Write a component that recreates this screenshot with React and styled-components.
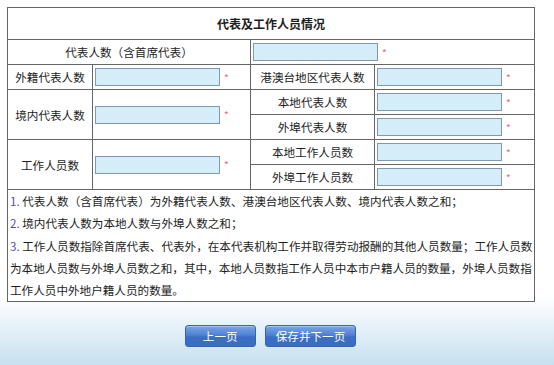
import React from "react";
import styled, { createGlobalStyle } from "styled-components";

const GlobalStyle = createGlobalStyle`
  html, body {
    margin: 0;
    padding: 0;
  }
  body {
    font-family: "Noto Sans CJK SC", "Liberation Sans", sans-serif;
    color: #1e1e1e;
  }
`;

const Page = styled.div`
  box-sizing: border-box;
  min-height: 365px;
  padding: 7px 0 0 7px;
  background: linear-gradient(
    to bottom,
    #fff 0,
    #fff 296px,
    #eef5fb 318px,
    #c6e0ef 365px
  );
`;

const Form = styled.div`
  width: 527px;
`;

const Table = styled.table`
  width: 527px;
  border-collapse: collapse;
  table-layout: fixed;
  background: #fff;
  border: 1px solid #555;
  font-size: 11.6px;
`;

const Cell = styled.td`
  border: 1px solid #666;
  padding: 0 0 0 ${(p) => (p.$field ? "2px" : "0")};
  height: ${(p) => (p.$tall ? "31px" : "24px")};
  text-align: ${(p) => (p.$field ? "left" : "center")};
  vertical-align: middle;
  white-space: nowrap;
`;

const Title = styled(Cell)`
  font-weight: bold;
  font-size: 12px;
`;

const Input = styled.input`
  box-sizing: border-box;
  width: 125px;
  height: 18px;
  margin: 0;
  padding: 0 2px;
  border: 1px solid #7f9aae;
  background: #d5edf9;
  vertical-align: middle;
  outline: none;
`;

const Req = styled.span`
  display: inline-block;
  margin-left: 4px;
  color: #f4607a;
  font-size: 10px;
  vertical-align: middle;
`;

const Notes = styled.td`
  border: 1px solid #666;
  padding: 0 0 0 2px;
  line-height: 22.3px;
  text-align: left;
  white-space: nowrap;
`;

const Num = styled.span`
  color: #5248b0;
`;

const Buttons = styled.div`
  display: flex;
  justify-content: center;
  gap: 9px;
  margin-top: 23px;
`;

const Button = styled.button`
  min-width: 71px;
  height: 22px;
  padding: 0 10px;
  border: 1px solid #3862ae;
  border-radius: 3px;
  background: linear-gradient(to bottom, #7aa6e6 0%, #4e82d4 45%, #3c6fc4 55%, #3a6cc0 100%);
  box-shadow: inset 0 1px 0 rgba(255, 255, 255, 0.35);
  color: #fff;
  font-family: inherit;
  font-size: 11.6px;
  cursor: pointer;
`;

const Field = ({ rowSpan, colSpan }) => (
  <Cell $field rowSpan={rowSpan} colSpan={colSpan}>
    <Input type="text" />
    <Req>*</Req>
  </Cell>
);

export default function App() {
  return (
    <>
      <GlobalStyle />
      <Page>
        <Form>
          <Table>
            <colgroup>
              <col style={{ width: 85 }} />
              <col style={{ width: 158 }} />
              <col style={{ width: 124 }} />
              <col style={{ width: 160 }} />
            </colgroup>
            <tbody>
              <tr>
                <Title $tall colSpan={4}>代表及工作人员情况</Title>
              </tr>
              <tr>
                <Cell colSpan={2}>代表人数（含首席代表）</Cell>
                <Field colSpan={2} />
              </tr>
              <tr>
                <Cell>外籍代表人数</Cell>
                <Field />
                <Cell>港澳台地区代表人数</Cell>
                <Field />
              </tr>
              <tr>
                <Cell rowSpan={2}>境内代表人数</Cell>
                <Field rowSpan={2} />
                <Cell>本地代表人数</Cell>
                <Field />
              </tr>
              <tr>
                <Cell>外埠代表人数</Cell>
                <Field />
              </tr>
              <tr>
                <Cell rowSpan={2}>工作人员数</Cell>
                <Field rowSpan={2} />
                <Cell>本地工作人员数</Cell>
                <Field />
              </tr>
              <tr>
                <Cell>外埠工作人员数</Cell>
                <Field />
              </tr>
              <tr>
                <Notes colSpan={4}>
                  <div>
                    <Num>1.</Num> 代表人数（含首席代表）为外籍代表人数、港澳台地区代表人数、境内代表人数之和；
                  </div>
                  <div>
                    <Num>2.</Num> 境内代表人数为本地人数与外埠人数之和；
                  </div>
                  <div>
                    <Num>3.</Num> 工作人员数指除首席代表、代表外，在本代表机构工作并取得劳动报酬的其他人员数量；工作人员数
                    <br />
                    为本地人员数与外埠人员数之和，其中，本地人员数指工作人员中本市户籍人员的数量，外埠人员数指
                    <br />
                    工作人员中外地户籍人员的数量。
                  </div>
                </Notes>
              </tr>
            </tbody>
          </Table>
          <Buttons>
            <Button type="button">上一页</Button>
            <Button type="button">保存并下一页</Button>
          </Buttons>
        </Form>
      </Page>
    </>
  );
}
